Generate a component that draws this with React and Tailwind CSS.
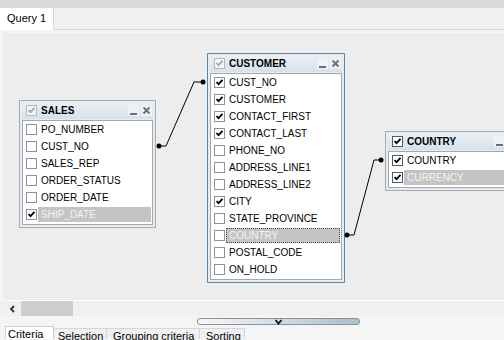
import React from "react";

const font = { fontFamily: '"Liberation Sans", Arial, sans-serif' };

function Check({ checked, tone = "row" }) {
  const box =
    tone === "title"
      ? "border-[#b3b7bb] bg-[#f3f5f7]"
      : tone === "active"
      ? "border-[#55595d] bg-white"
      : "border-[#8f9396] bg-white";
  const stroke = tone === "title" ? "#a4a7aa" : "#000";
  return (
    <div className={`w-[11px] h-[11px] border ${box} shrink-0 flex items-center justify-center`}>
      {checked && (
        <svg width="9" height="9" viewBox="0 0 9 9">
          <polyline points="1.5,4 3.5,6.2 7.5,1.8" fill="none" stroke={stroke} strokeWidth="1.8" />
        </svg>
      )}
    </div>
  );
}

function WinButtons() {
  return (
    <div className="ml-auto flex gap-[2px]">
      <div className="w-[11px] h-[11px] bg-[#eef2f6] flex items-end justify-center pb-[1px]">
        <div className="w-[7px] h-[2px] bg-[#6b6f73]" />
      </div>
      <div className="w-[11px] h-[11px] bg-[#eef2f6] flex items-center justify-center">
        <svg width="9" height="9" viewBox="0 0 9 9">
          <path d="M1.5 1.5 L7.5 7.5 M7.5 1.5 L1.5 7.5" stroke="#6b6f73" strokeWidth="1.8" />
        </svg>
      </div>
    </div>
  );
}

function Win({ pos, title, rows, active, titleTone, titleChecked }) {
  return (
    <div
      className={`absolute ${pos} flex flex-col border ${
        active ? "border-[#5a86a6]" : "border-[#a3adb7]"
      } bg-[#e6ecf2] pt-[1px] px-[2px] pb-[2px]`}
    >
      <div className="h-[17px] flex items-center pl-[4px] pr-[1px] gap-[4px] bg-gradient-to-b from-[#eaf0f5] to-[#d8e1ea]">
        <Check checked={titleChecked} tone={titleTone} />
        <span className="text-[10px] font-bold text-black leading-[17px] whitespace-nowrap">{title}</span>
        <WinButtons />
      </div>
      <div className="mt-[1px] bg-white border border-[#a4a8ac] pb-[1px] flex flex-col">
        {rows.map((r) => (
          <div key={r.n} className="h-[17px] flex items-center pl-[3px]">
            <Check checked={r.c} tone={titleTone === "active" ? "active" : "row"} />
            {r.sel ? (
              <div
                className={`ml-[1px] mr-[1px] flex-1 h-[15px] flex items-center pl-[2px] bg-[#c4c4c4] text-[#f4f4f4] text-[10px] whitespace-nowrap ${
                  r.focus ? "border border-dotted border-[#4a4a4a]" : "border border-transparent"
                }`}
              >
                {r.n}
              </div>
            ) : (
              <span className="ml-[4px] text-[10px] text-black whitespace-nowrap">{r.n}</span>
            )}
          </div>
        ))}
      </div>
    </div>
  );
}

const sales = [
  { n: "PO_NUMBER" },
  { n: "CUST_NO" },
  { n: "SALES_REP" },
  { n: "ORDER_STATUS" },
  { n: "ORDER_DATE" },
  { n: "SHIP_DATE", c: true, sel: true },
];

const customer = [
  { n: "CUST_NO", c: true },
  { n: "CUSTOMER", c: true },
  { n: "CONTACT_FIRST", c: true },
  { n: "CONTACT_LAST", c: true },
  { n: "PHONE_NO" },
  { n: "ADDRESS_LINE1" },
  { n: "ADDRESS_LINE2" },
  { n: "CITY", c: true },
  { n: "STATE_PROVINCE" },
  { n: "COUNTRY", sel: true, focus: true },
  { n: "POSTAL_CODE" },
  { n: "ON_HOLD" },
];

const country = [
  { n: "COUNTRY", c: true },
  { n: "CURRENCY", c: true, sel: true },
];

export default function App() {
  return (
    <div className="w-[504px] h-[340px] overflow-hidden bg-[#f5f5f5] flex flex-col" style={font}>
      <div className="h-[8px] bg-[#dadada] shrink-0" />
      <div className="h-[22px] shrink-0 flex bg-[#f0f0f0] border-b border-[#d6d6d6]">
        <div className="w-[54px] h-[22px] bg-white border-r border-[#d6d6d6] pl-[7px] text-[11px] leading-[21px] text-black">
          Query 1
        </div>
      </div>
      <div className="h-[3px] shrink-0" />
      <div className="ml-[3px] h-[268px] shrink-0 relative bg-[#ededed] border-b border-white overflow-hidden">
        <Win pos="left-[16px] top-[67px] w-[137px]" title="SALES" rows={sales} titleTone="title" titleChecked />
        <Win pos="left-[204px] top-[20px] w-[138px]" title="CUSTOMER" rows={customer} titleTone="title" titleChecked active />
        <Win pos="left-[382px] top-[98px] w-[137px]" title="COUNTRY" rows={country} titleTone="active" titleChecked />
        <svg className="absolute left-0 top-0 pointer-events-none" width="501" height="268">
          <path d="M156 113 H163 L191 49 H200" fill="none" stroke="#000" strokeWidth="1" />
          <circle cx="156" cy="113" r="2.5" fill="#000" />
          <circle cx="200" cy="49" r="2.5" fill="#000" />
          <path d="M344 202 H351 L371 127 H378" fill="none" stroke="#000" strokeWidth="1" />
          <circle cx="344" cy="202" r="2.5" fill="#000" />
          <circle cx="378" cy="127" r="2.5" fill="#000" />
        </svg>
      </div>
      <div className="h-[15px] shrink-0 flex items-center bg-[#f0f0f0]">
        <svg className="ml-[9px]" width="7" height="8" viewBox="0 0 7 8">
          <polyline points="5,1 2,4 5,7" fill="none" stroke="#333" strokeWidth="1.8" />
        </svg>
        <div className="ml-[5px] w-[52px] h-[15px] bg-[#cdcdcd]" />
      </div>
      <div className="h-[10px] shrink-0 relative">
        <div className="absolute left-[197px] top-[2px] w-[163px] h-[7px] rounded-[3px] border border-[#8a9096] bg-gradient-to-r from-[#f6f9fb] to-[#aac0cd] flex items-center justify-center">
          <svg width="9" height="6" viewBox="0 0 9 6">
            <polyline points="1.5,1 4.5,4.5 7.5,1" fill="none" stroke="#111" strokeWidth="1.8" />
          </svg>
        </div>
      </div>
      <div className="h-[13px] shrink-0 flex items-start pl-[5px] text-[11px] text-black">
        <div className="w-[49px] h-[13px] bg-white border border-b-0 border-[#cfcfcf] pl-[2px] leading-[14px]">Criteria</div>
        <div className="mt-[2px] w-[53px] h-[11px] bg-[#f0f0f0] border-t border-r border-[#d6d6d6] pl-[4px] leading-[14px]">Selection</div>
        <div className="mt-[2px] w-[93px] h-[11px] bg-[#f0f0f0] border-t border-r border-[#d6d6d6] pl-[6px] leading-[14px] whitespace-nowrap">Grouping criteria</div>
        <div className="mt-[2px] w-[45px] h-[11px] bg-[#f0f0f0] border-t border-r border-[#d6d6d6] pl-[6px] leading-[14px]">Sorting</div>
      </div>
    </div>
  );
}
